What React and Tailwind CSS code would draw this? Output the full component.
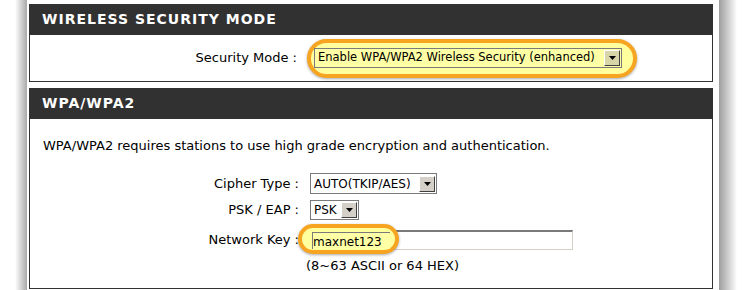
export default function App() {
  const font = { fontFamily: '"DejaVu Sans", Verdana, sans-serif' };

  return (
    <div className="w-[744px] h-[290px] bg-white overflow-hidden flex" style={font}>
      {/* left page shadow */}
      <div className="w-[12px] ml-[15px] shrink-0 bg-gradient-to-r from-white to-[#a9a9a9]" />

      <div className="w-[692px] shrink-0 pl-[2px] pr-[6px] pt-[4px] flex flex-col gap-[6px]">
        {/* Wireless security mode */}
        <div className="flex flex-col">
          <div className="h-[31px] bg-[#313131] text-white text-[14px] font-bold tracking-[1px] pl-[13px] flex items-center">
            WIRELESS SECURITY MODE
          </div>
          <div className="h-[47px] border border-t-0 border-[#333] flex items-center text-[13px] text-black">
            <div className="w-[267px] text-right whitespace-nowrap">Security Mode :</div>
            <div className="relative ml-[17px]">
              <div className="absolute -left-[7px] -right-[15px] -top-[9px] -bottom-[10px] rounded-full border-[4px] border-[#f7a521] bg-[#ffff9e] shadow-[0_1px_3px_rgba(0,0,0,0.35)]" />
              <div className="relative h-[20px] w-[308px] border border-[#7a7a7a] bg-[#ffffa6] flex items-center justify-between pl-[3px] pr-[1px] text-[11.5px] whitespace-nowrap">
                <span>Enable WPA/WPA2 Wireless Security (enhanced)</span>
                <Arrow tint="bg-[#d8d6a8]" />
              </div>
            </div>
          </div>
        </div>

        {/* WPA/WPA2 */}
        <div className="flex flex-col">
          <div className="h-[31px] bg-[#313131] text-white text-[14px] font-bold tracking-[1px] pl-[13px] flex items-center">
            WPA/WPA2
          </div>
          <div className="h-[170px] border border-t-0 border-[#333] text-[13px] text-black pl-[13px] pt-[17px]">
            <p className="whitespace-nowrap">WPA/WPA2 requires stations to use high grade encryption and authentication.</p>

            <div className="mt-[17px] flex flex-col">
              <div className="flex items-center h-[22px]">
                <div className="w-[256px] text-right whitespace-nowrap">Cipher Type :</div>
                <div className="ml-[11px] h-[21px] w-[127px] border border-[#7a7a7a] bg-white flex items-center justify-between pl-[3px] pr-[1px] text-[12px] whitespace-nowrap">
                  <span>AUTO(TKIP/AES)</span>
                  <Arrow tint="bg-[#d4d0c8]" />
                </div>
              </div>

              <div className="flex items-center h-[22px] mt-[4px]">
                <div className="w-[256px] text-right whitespace-nowrap">PSK / EAP :</div>
                <div className="ml-[11px] h-[20px] w-[49px] border border-[#7a7a7a] bg-white flex items-center justify-between pl-[3px] pr-[1px] text-[12px]">
                  <span>PSK</span>
                  <Arrow tint="bg-[#d4d0c8]" />
                </div>
              </div>

              <div className="flex items-center h-[22px] mt-[8px]">
                <div className="w-[256px] text-right whitespace-nowrap">Network Key :</div>
                <div className="relative ml-[11px] h-[20px] w-[263px] border-t-2 border-l-2 border-t-[#7a7a7a] border-l-[#7a7a7a] border-r border-b border-r-[#d4d0c8] border-b-[#d4d0c8] bg-white">
                  <div className="absolute -left-[14px] -top-[8px] w-[101px] h-[30px] rounded-full border-[4px] border-[#f7a521] bg-[#ffff9e] shadow-[0_1px_3px_rgba(0,0,0,0.35)]" />
                  <div className="absolute left-0 top-0 w-[78px] h-full bg-[#ffffa6] border-l border-t border-[#7a7a7a]" />
                  <span className="relative pl-[1px] leading-[18px] text-[12px]">maxnet123</span>
                </div>
              </div>

              <div className="flex h-[18px] items-center mt-[6px]">
                <div className="w-[263px] shrink-0" />
                <span className="whitespace-nowrap">(8~63 ASCII or 64 HEX)</span>
              </div>
            </div>
          </div>
        </div>
      </div>

      {/* right page shadow */}
      <div className="w-[18px] shrink-0 bg-gradient-to-r from-[#9e9e9e] to-white" />
    </div>
  );
}

function Arrow({ tint }) {
  return (
    <div className={`w-[16px] h-[16px] shrink-0 ${tint} border border-t-white border-l-white border-r-[#404040] border-b-[#404040] flex items-center justify-center`}>
      <svg width="7" height="4" viewBox="0 0 7 4">
        <path d="M0 0h7L3.5 4z" fill="#000" />
      </svg>
    </div>
  );
}
